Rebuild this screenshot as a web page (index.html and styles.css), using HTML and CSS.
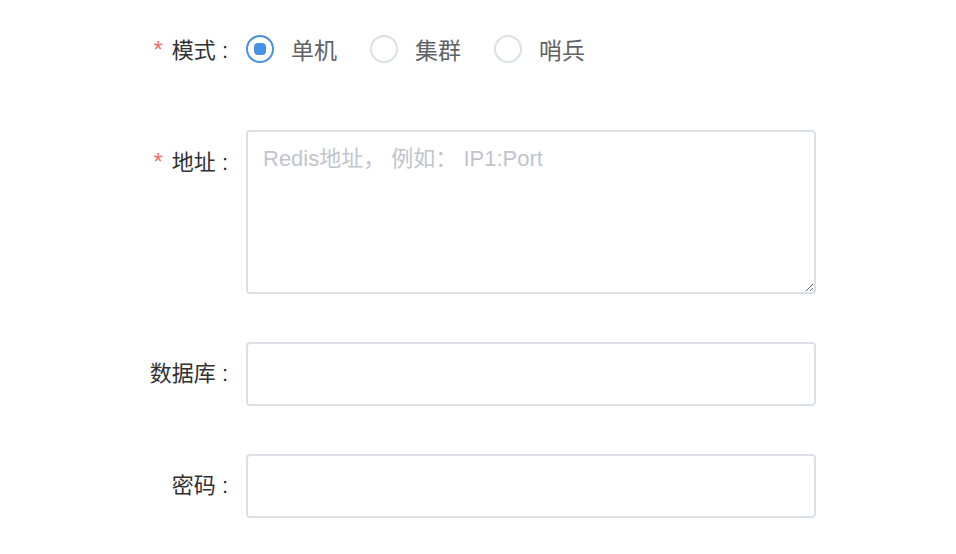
FILE: index.html
```html
<!DOCTYPE html>
<html lang="zh-CN">
<head>
<meta charset="utf-8">
<link rel="stylesheet" href="styles.css">
</head>
<body>
<form class="form">
  <div class="item item-radio">
    <label class="label required">模式</label>
    <div class="content radios">
      <label class="radio checked"><span class="circle"></span><span class="rtext">单机</span></label>
      <label class="radio"><span class="circle"></span><span class="rtext">集群</span></label>
      <label class="radio"><span class="circle"></span><span class="rtext">哨兵</span></label>
    </div>
  </div>
  <div class="item">
    <label class="label required">地址</label>
    <div class="content">
      <textarea class="textarea" placeholder="Redis地址， 例如： IP1:Port"></textarea>
    </div>
  </div>
  <div class="item">
    <label class="label">数据库</label>
    <div class="content"><input class="input" type="text"></div>
  </div>
  <div class="item">
    <label class="label">密码</label>
    <div class="content"><input class="input" type="password"></div>
  </div>
</form>
</body>
</html>
```
FILE: styles.css
```css
html, body {
  margin: 0;
  padding: 0;
  background: #fff;
}
body {
  font-family: "Liberation Sans", "Noto Sans CJK SC", sans-serif;
  font-size: 22px;
  color: #303133;
}
.form {
  display: flex;
  flex-direction: column;
  gap: 48px;
  padding-top: 18px;
}
.item {
  display: flex;
  align-items: flex-start;
}
.label {
  width: 228px;
  padding-right: 18px;
  text-align: right;
  line-height: 64px;
  height: 64px;
  color: #303133;
  flex: none;
}
.label::after {
  content: ":";
  margin-left: 6px;
}
.label.required::before {
  content: "*";
  color: #f56c6c;
  font-size: 24px;
  margin-right: 9px;
}
.content {
  width: 570px;
  flex: none;
}
.radios {
  display: flex;
  align-items: center;
  height: 64px;
  margin-top: -1px;
}
.radio {
  display: flex;
  align-items: center;
  margin-right: 33px;
  color: #606266;
  cursor: pointer;
}
.circle {
  box-sizing: border-box;
  width: 28px;
  height: 28px;
  border: 2px solid #dcdfe6;
  border-radius: 50%;
  display: flex;
  align-items: center;
  justify-content: center;
}
.radio.checked .circle {
  border-color: #4a90e2;
}
.radio.checked .circle::after {
  content: "";
  width: 12px;
  height: 12px;
  border-radius: 4px;
  background: #4a90e2;
}
.rtext {
  margin-left: 17px;
  font-size: 23px;
}
.textarea, .input {
  box-sizing: border-box;
  width: 570px;
  border: 2px solid #dcdfe6;
  border-radius: 4px;
  font-family: inherit;
  font-size: 22px;
  color: #606266;
  outline: none;
  display: block;
  margin: 0;
}
.textarea {
  height: 164px;
  padding: 10px 15px;
  line-height: 1.5;
  resize: vertical;
}
.textarea::placeholder {
  color: #c0c4cc;
}
.input {
  height: 64px;
  padding: 0 15px;
}
```
